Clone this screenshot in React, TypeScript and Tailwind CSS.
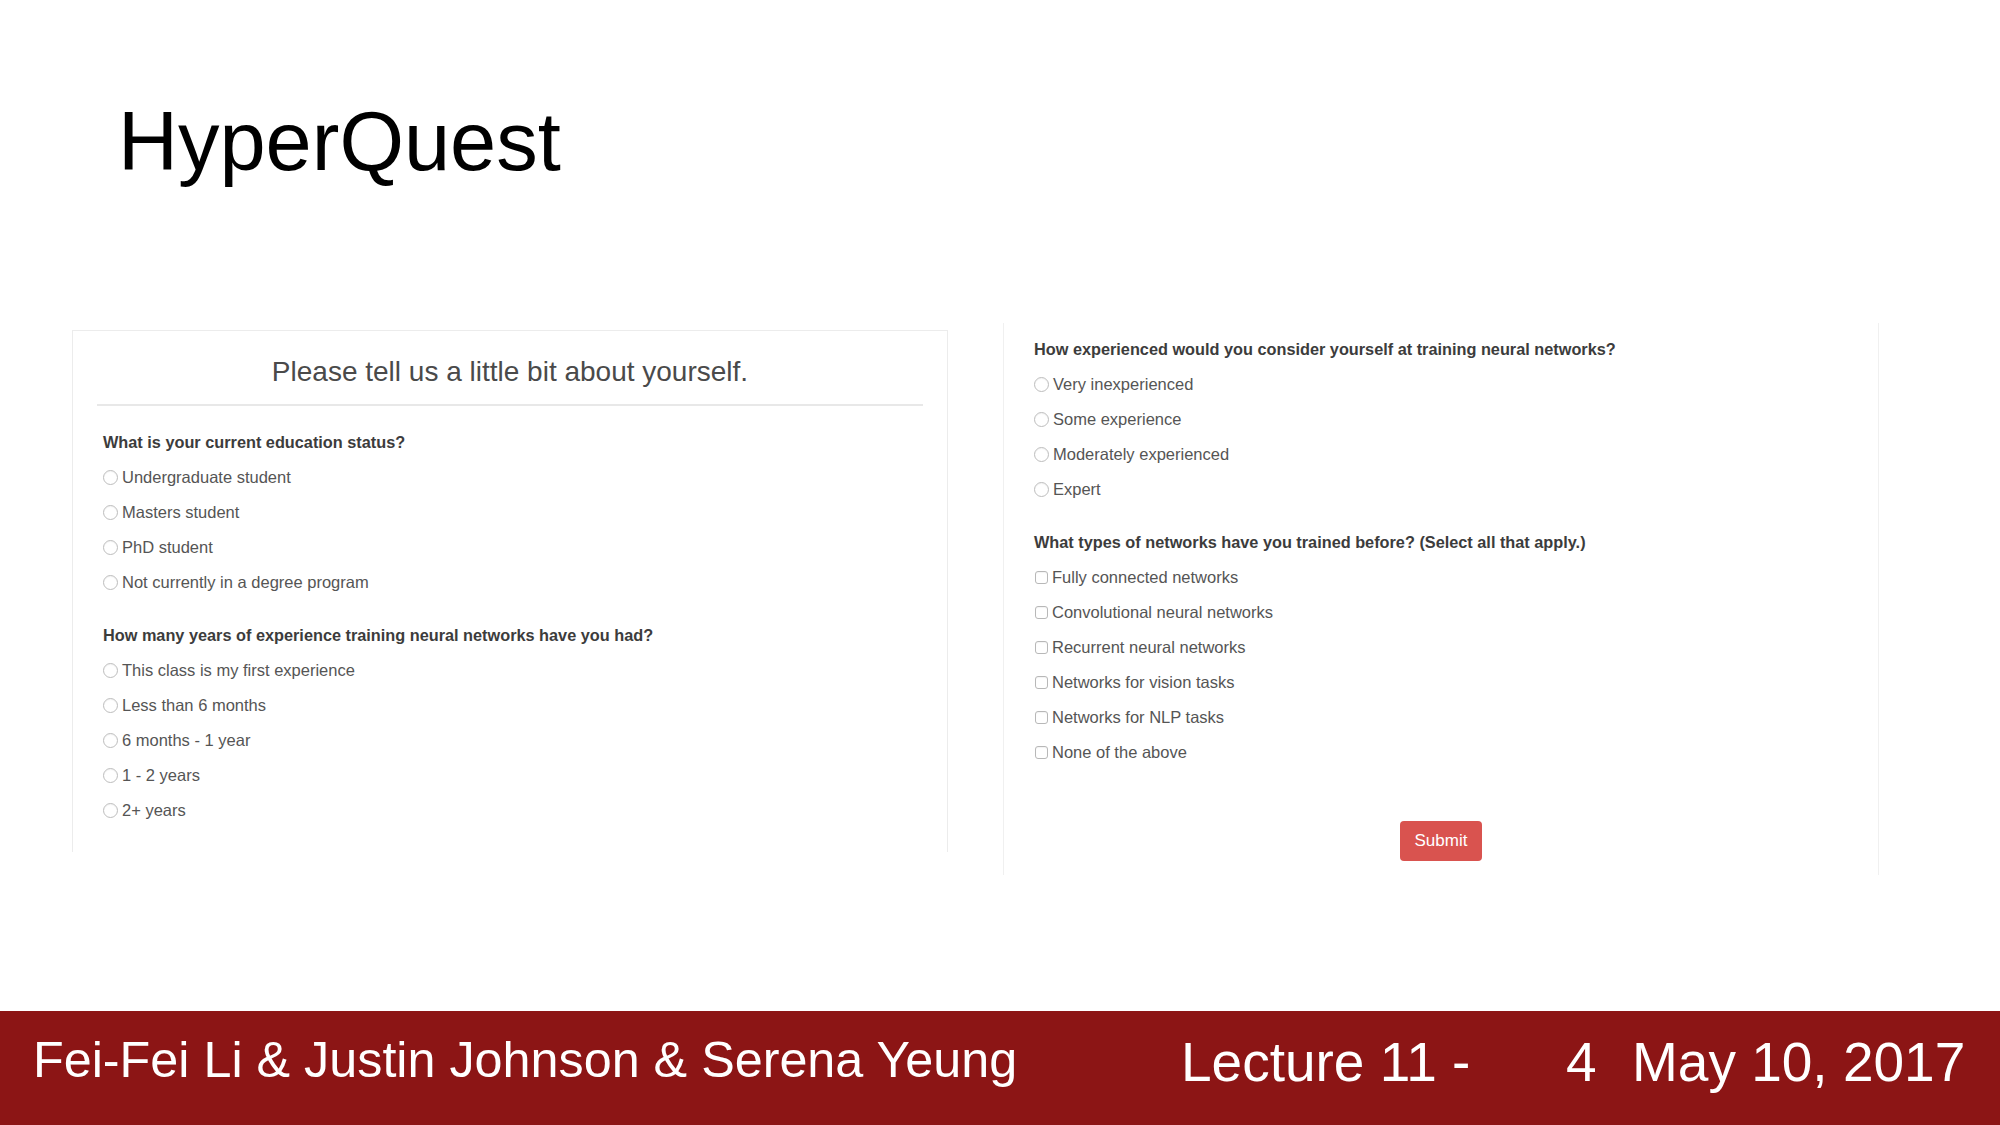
import React from "react";

const education = [
  "Undergraduate student",
  "Masters student",
  "PhD student",
  "Not currently in a degree program",
];

const years = [
  "This class is my first experience",
  "Less than 6 months",
  "6 months - 1 year",
  "1 - 2 years",
  "2+ years",
];

const experience = [
  "Very inexperienced",
  "Some experience",
  "Moderately experienced",
  "Expert",
];

const networks = [
  "Fully connected networks",
  "Convolutional neural networks",
  "Recurrent neural networks",
  "Networks for vision tasks",
  "Networks for NLP tasks",
  "None of the above",
];

function Option({ label, box }: { label: string; box?: boolean }) {
  return (
    <label className="flex h-[35px] items-center">
      {box ? (
        <span className="ml-[1px] h-[13px] w-[13px] rounded-[3px] border border-[#b8b8b8] bg-white shadow-[inset_0_1px_1px_rgba(0,0,0,0.05)]" />
      ) : (
        <span className="h-[15px] w-[15px] rounded-full border border-[#bdbdbd] bg-white shadow-[inset_0_1px_1px_rgba(0,0,0,0.05)]" />
      )}
      <span className="ml-[4px] text-[16.5px] text-[#555555]">{label}</span>
    </label>
  );
}

function Question({
  title,
  options,
  box,
}: {
  title: string;
  options: string[];
  box?: boolean;
}) {
  return (
    <div>
      <p className="mb-[8px] text-[16.3px] font-bold leading-[20px] text-[#3c3c3c]">
        {title}
      </p>
      {options.map((o) => (
        <Option key={o} label={o} box={box} />
      ))}
    </div>
  );
}

export default function App() {
  return (
    <div className="flex h-[1125px] w-[2000px] flex-col overflow-hidden bg-white font-['Liberation_Sans',Arial,sans-serif]">
      <h1 className="pl-[118px] pt-[100px] text-[83px] leading-none text-black">
        HyperQuest
      </h1>

      <div className="mt-[140px] flex items-start gap-[55px] pl-[72px]">
        <div className="mt-[7px] w-[876px] border-x border-t border-[#ececec] px-6 pb-[24px] pt-[27px]">
          <h2 className="text-center text-[28px] leading-none text-[#4a4a4a]">
            Please tell us a little bit about yourself.
          </h2>
          <div className="mt-[18px] h-[2px] bg-[#e8e8e8]" />
          <div className="mt-[26px] flex flex-col gap-[25px] px-[6px]">
            <Question
              title="What is your current education status?"
              options={education}
            />
            <Question
              title="How many years of experience training neural networks have you had?"
              options={years}
            />
          </div>
        </div>

        <div className="w-[876px] border-x border-[#f0f0f0] px-[30px] pb-[14px] pt-[16px]">
          <div className="flex flex-col gap-[25px]">
            <Question
              title="How experienced would you consider yourself at training neural networks?"
              options={experience}
            />
            <Question
              title="What types of networks have you trained before? (Select all that apply.)"
              options={networks}
              box
            />
          </div>
          <div className="mt-[51px] flex justify-center">
            <button className="h-[40px] w-[82px] rounded-[4px] bg-[#d9534f] text-[17px] text-white">
              Submit
            </button>
          </div>
        </div>
      </div>

      <footer className="mt-auto flex h-[114px] items-start bg-[#8c1515] pt-[24px] text-white">
        <span className="w-[1181px] pl-[33px] text-[50.3px] leading-none">
          Fei-Fei Li &amp; Justin Johnson &amp; Serena Yeung
        </span>
        <span className="w-[385px] text-[55px] leading-none">Lecture 11 -</span>
        <span className="w-[66px] text-[55px] leading-none">4</span>
        <span className="text-[55px] leading-none">May 10, 2017</span>
      </footer>
    </div>
  );
}
